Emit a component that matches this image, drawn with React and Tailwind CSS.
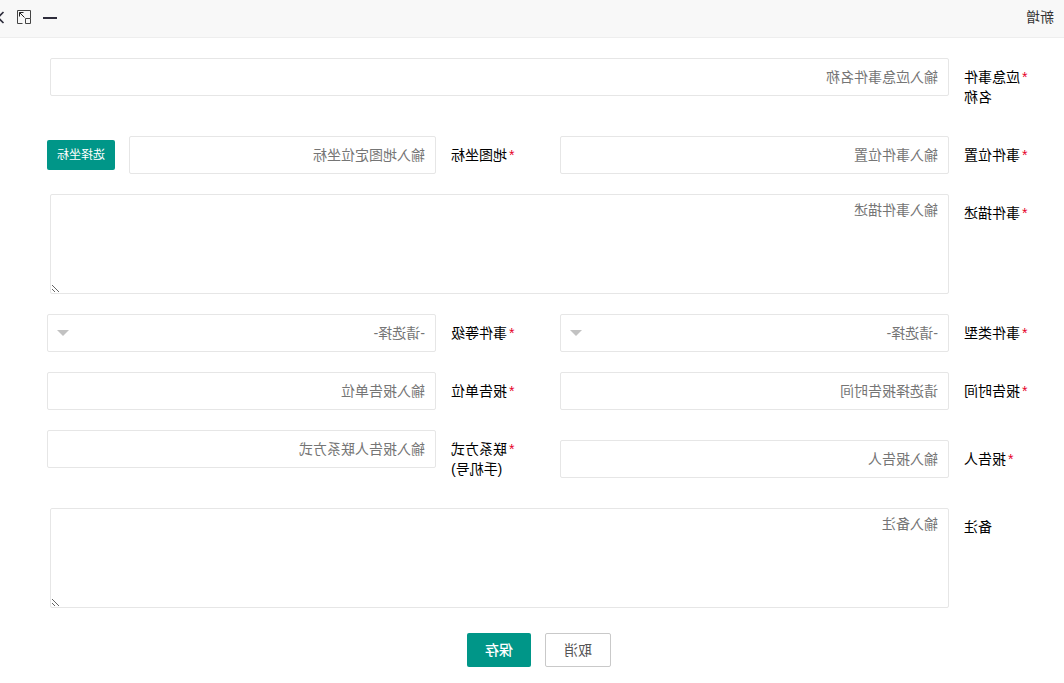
import React from "react";

const inputStyle =
  "block w-full h-[38px] px-2.5 border border-[#e6e6e6] rounded-xs bg-white text-black placeholder:text-[#757575] outline-none";

function Field({ id, label, required = true, className = "pr-3.5", children }) {
  return (
    <div className={`flex items-start ${className}`}>
      <label
        htmlFor={id}
        className="w-[110px] shrink-0 py-[9px] pl-5 pr-[15px] text-right leading-5 text-black"
      >
        {required && <span className="mr-0.5 text-[#e60026]">*</span>}
        {label}
      </label>
      <div className="flex-1 min-w-0">{children}</div>
    </div>
  );
}

function TextInput({ id, placeholder }) {
  return <input id={id} type="text" placeholder={placeholder} className={inputStyle} />;
}

function TextArea({ id, placeholder }) {
  return (
    <textarea
      id={id}
      placeholder={placeholder}
      className="block w-full h-[100px] px-2.5 py-1.5 border border-[#e6e6e6] rounded-xs bg-white leading-[18px] placeholder:text-[#757575] outline-none resize"
    />
  );
}

function SelectInput({ id }) {
  return (
    <div className="relative">
      <select
        id={id}
        className="block w-full h-[38px] px-2.5 border border-[#e6e6e6] rounded-xs bg-white text-[#757575] appearance-none outline-none"
      >
        <option>-请选择-</option>
      </select>
      <svg
        className="absolute right-2.5 top-4 w-3 h-1.5 pointer-events-none"
        viewBox="0 0 12 6"
        fill="#c2c2c2"
      >
        <path d="M0 0h12L6 6z" />
      </svg>
    </div>
  );
}

function TitleBar() {
  return (
    <header className="flex items-center justify-between h-[38px] pl-2.5 pb-1 border-b border-[#eeeeee] bg-[#f8f8f8] overflow-hidden">
      <h1 className="text-[#333333]">新增</h1>
      <div className="flex gap-3 -mr-[9px]">
        <button type="button" aria-label="最小化">
          <svg width="14" height="14" viewBox="0 0 14 14" fill="#2e2d3c">
            <path d="M0 7h14v2H0z" />
          </svg>
        </button>
        <button type="button" aria-label="最大化">
          <svg width="14" height="14" viewBox="0 0 14 14" fill="none" stroke="#444444">
            <path d="M8.5 13.5h5V.5H.5v8" />
            <path d="M.5 8.5h5v5h-5z" />
            <path d="M7.5 2.5h4v4M11.5 2.5l-5 5" stroke="#222222" />
          </svg>
        </button>
        <button type="button" aria-label="关闭">
          <svg width="14" height="14" viewBox="0 0 14 14" fill="none" stroke="#2e2d3c" strokeWidth="1.6">
            <path d="M1.5 2l11 11M12.5 2l-11 11" />
          </svg>
        </button>
      </div>
    </header>
  );
}

function App() {
  return (
    <div className="-scale-x-100 bg-white pb-4 text-sm font-['Liberation_Sans','Noto_Sans_CJK_SC',sans-serif]">
      <TitleBar />

      <form>
        <div className="grid grid-cols-2 gap-y-5 pt-5 pl-[5px] pr-[33px]">
          <Field id="name" label="应急事件名称" className="col-span-2 pr-[17px]">
            <TextInput id="name" placeholder="输入应急事件名称" />
          </Field>

          <Field id="location" label="事件位置">
            <TextInput id="location" placeholder="输入事件位置" />
          </Field>
          <Field id="coords" label="地图坐标">
            <div className="flex items-center gap-3.5">
              <TextInput id="coords" placeholder="输入地图定位坐标" />
              <button
                type="button"
                className="shrink-0 h-[30px] px-2.5 rounded-xs bg-[#009688] text-xs text-white"
              >
                选择坐标
              </button>
            </div>
          </Field>

          <Field id="desc" label="事件描述" className="col-span-2 pr-[17px]">
            <TextArea id="desc" placeholder="输入事件描述" />
          </Field>

          <Field id="type" label="事件类型">
            <SelectInput id="type" />
          </Field>
          <Field id="level" label="事件等级">
            <SelectInput id="level" />
          </Field>

          <Field id="time" label="报告时间">
            <TextInput id="time" placeholder="请选择报告时间" />
          </Field>
          <Field id="unit" label="报告单位">
            <TextInput id="unit" placeholder="输入报告单位" />
          </Field>

          <Field id="reporter" label="报告人" className="self-center pr-3.5">
            <TextInput id="reporter" placeholder="输入报告人" />
          </Field>
          <Field id="phone" label="联系方式(手机号)">
            <TextInput id="phone" placeholder="输入报告人联系方式" />
          </Field>

          <Field id="remark" label="备注" required={false} className="col-span-2 pr-[17px]">
            <TextArea id="remark" placeholder="输入备注" />
          </Field>
        </div>

        <div className="flex justify-center gap-3.5 pt-[25px] pr-3.5">
          <button
            type="button"
            className="h-[34px] w-[66px] border border-[#c9c9c9] rounded-xs bg-white text-[#555555]"
          >
            取消
          </button>
          <button type="submit" className="h-[34px] w-16 rounded-xs bg-[#009688] font-medium text-white">
            保存
          </button>
        </div>
      </form>
    </div>
  );
}

export default App;
